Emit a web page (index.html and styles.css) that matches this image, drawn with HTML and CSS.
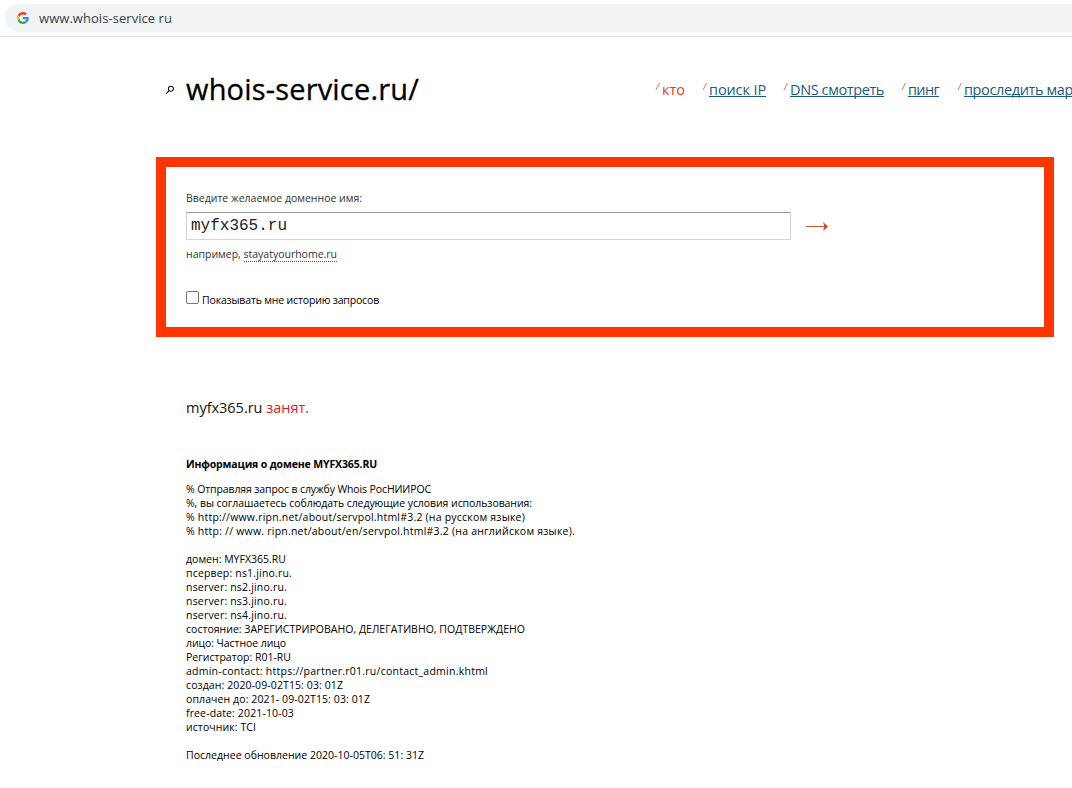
FILE: index.html
```html
<!DOCTYPE html>
<html lang="ru">
<head>
<meta charset="utf-8">
<title>whois-service.ru/</title>
<link rel="stylesheet" href="styles.css">
</head>
<body>
<div class="toolbar">
  <div class="address">
    <svg class="google" viewBox="0 0 48 48"><path fill="#ea4335" d="M24 9.500c3.500 0 6.700 1.200 9.200 3.600l6.900-6.900C35.900 2.400 30.500 0 24 0 14.600 0 6.500 5.400 2.600 13.200l8 6.200C12.400 13.700 17.700 9.500 24 9.500z"/><path fill="#4285f4" d="M47 24.500c0-1.600-.2-3.100-.4-4.500H24v9h12.900c-.6 3-2.200 5.500-4.700 7.200l7.700 6C44.400 38 47 31.800 47 24.500z"/><path fill="#fbbc05" d="M10.500 28.600c-.5-1.500-.8-3-.8-4.600s.3-3.100.8-4.600l-8-6.200C.9 16.500 0 20.100 0 24s.9 7.500 2.600 10.800z"/><path fill="#34a853" d="M24 48c6.500 0 11.900-2.100 15.900-5.800l-7.700-6c-2.200 1.500-4.900 2.300-8.200 2.300-6.300 0-11.600-4.200-13.500-9.900l-8 6.200C6.500 42.600 14.600 48 24 48z"/></svg>
    <span class="url" data-width="133">www.whois-service ru</span>
  </div>
</div>
<header class="header">
  <svg class="search" viewBox="0 0 10 10"><circle cx="5.900" cy="3.800" r="2.500"/><path d="M4.100 5.700 1 8.800"/></svg>
  <h1 class="title"><span data-width="233">whois-service.ru/</span></h1>
  <nav class="nav">
    <a class="item current"><i class="slash">/</i><span data-width="23">кто</span></a>
    <a class="item second"><i class="slash">/</i><span class="link" data-width="57">поиск IP</span></a>
    <a class="item third"><i class="slash">/</i><span class="link" data-width="94">DNS смотреть</span></a>
    <a class="item fourth"><i class="slash">/</i><span class="link" data-width="31">пинг</span></a>
    <a class="item fifth"><i class="slash">/</i><span class="link" data-width="109">проследить мар</span></a>
  </nav>
</header>
<main class="main">
  <form class="lookup">
    <label class="caption" for="domain"><span data-width="176">Введите желаемое доменное имя:</span></label>
    <div class="field">
      <input class="domain" id="domain" type="text" value="myfx365.ru">
      <svg class="arrow" viewBox="0 0 24 10"><path class="shaft" d="M1 5.500H20"/><path class="head" d="M18 1 19.500 5.500 18 10 23 5.500z"/></svg>
    </div>
    <p class="example"><span data-width="151">например, <span class="sample">stayatyourhome.ru</span></span></p>
    <label class="history"><span class="check"></span><span data-width="177">Показывать мне историю запросов</span></label>
  </form>
  <section class="results">
    <p class="status"><span data-width="123">myfx365.ru <span class="taken">занят.</span></span></p>
    <h2 class="subtitle"><span data-width="191">Информация о домене MYFX365.RU</span></h2>
    <div class="record">
      <p><span data-width="245">% Отправляя запрос в службу Whois РосНИИРОС</span></p>
      <p><span data-width="346">%, вы соглашаетесь соблюдать следующие условия использования:</span></p>
      <p><span data-width="339">% http://www.ripn.net/about/servpol.html#3.2 (на русском языке)</span></p>
      <p><span data-width="389">% http: // www. ripn.net/about/en/servpol.html#3.2 (на английском языке).</span></p>
    </div>
    <div class="record">
      <p><span data-width="100">домен: MYFX365.RU</span></p>
      <p><span data-width="106">псервер: ns1.jino.ru.</span></p>
      <p><span data-width="101">nserver: ns2.jino.ru.</span></p>
      <p><span data-width="101">nserver: ns3.jino.ru.</span></p>
      <p><span data-width="101">nserver: ns4.jino.ru.</span></p>
      <p><span data-width="339">состояние: ЗАРЕГИСТРИРОВАНО, ДЕЛЕГАТИВНО, ПОДТВЕРЖДЕНО</span></p>
      <p><span data-width="100">лицо: Частное лицо</span></p>
      <p><span data-width="105">Регистратор: R01-RU</span></p>
      <p><span data-width="302">admin-contact: https://partner.r01.ru/contact_admin.khtml</span></p>
      <p><span data-width="157">создан: 2020-09-02T15: 03: 01Z</span></p>
      <p><span data-width="184">оплачен до: 2021- 09-02T15: 03: 01Z</span></p>
      <p><span data-width="108">free-date: 2021-10-03</span></p>
      <p><span data-width="70">источник: TCI</span></p>
    </div>
    <div class="record">
      <p><span data-width="238">Последнее обновление 2020-10-05T06: 51: 31Z</span></p>
    </div>
  </section>
</main>
<script src="fit.js"></script>
</body>
</html>
```
FILE: styles.css
```css
* { box-sizing: border-box; }
body {
  margin: 0;
  height: 788px;
  overflow: hidden;
  background: #fff;
  color: #000;
  font: 10.5px/14px "Trebuchet MS", "Open Sans", sans-serif;
}
p, h1, h2 { margin: 0; }
[data-width] { white-space: nowrap; }
.toolbar {
  height: 37px;
  padding: 4px 0 0 5px;
  border-bottom: 1px solid #dfe1e4;
}
.address {
  display: flex;
  align-items: center;
  height: 28px;
  padding-left: 12px;
  border-radius: 14px 0 0 14px;
  background: #f1f3f4;
}
.google { width: 12px; height: 12px; margin-right: 10px; }
.url { color: #3c4043; font: 13px/28px "Open Sans", sans-serif; }
.header {
  display: flex;
  align-items: center;
  height: 104px;
  padding-left: 165px;
}
.search {
  flex: none;
  width: 10px;
  height: 10px;
  margin: 2px 11px 0 0;
  fill: none;
  stroke: #111;
  stroke-width: 1.1;
}
.title {
  flex: none;
  width: 470px;
  font-size: 29px;
  font-weight: 400;
  line-height: 36px;
  -webkit-text-stroke: 0.3px #000;
}
.nav { display: flex; flex: none; margin-top: 2px; font-size: 14.5px; line-height: 20px; color: #1b5b7e; }
.item { display: flex; flex: none; width: 47px; }
.second { width: 81px; }
.third { width: 118px; }
.fourth { width: 56px; }
.fifth { width: 120px; }
.slash { width: 6px; color: #e0492a; font-size: 9px; line-height: 14px; }
.current { color: #e0401c; }
.link { text-decoration: underline; text-underline-offset: 1px; text-decoration-thickness: 1px; text-decoration-skip-ink: none; }
.main { padding: 16px 18px 0 156px; }
.lookup {
  height: 180px;
  padding: 24px 20px 0;
  border: 10px solid #ff3500;
  color: #333;
}
.caption { display: block; height: 21px; }
.field { display: flex; align-items: center; }
.domain {
  width: 605px;
  height: 28px;
  padding: 0 4px;
  border: 1px solid #d4d4d4;
  border-top-color: #999;
  border-radius: 0;
  outline: none;
  color: #222;
  font: 16px "Liberation Mono", monospace;
}
.arrow { width: 24px; height: 10px; margin-left: 14px; }
.shaft { fill: none; stroke: #e25540; }
.head { fill: #df3628; }
.example { margin-top: 7px; }
.sample { border-bottom: 1px dotted #555; }
.history { display: flex; align-items: center; margin-top: 32px; color: #000; }
.check {
  width: 13px;
  height: 13px;
  margin: -6px 3px 0 0;
  border: 1px solid #767676;
  border-radius: 2px;
}
.results { padding: 61px 0 0 30px; }
.status { font-size: 14.5px; line-height: 20px; color: #111; }
.taken { color: #e01818; }
.subtitle { margin-top: 39px; font-size: 10.5px; font-weight: 700; line-height: 14px; }
.record { margin-top: 14px; }
.subtitle + .record { margin-top: 11px; }
```
FILE: fit.js
```js
document.querySelectorAll("[data-width]").forEach((run) => {
  const natural = run.getBoundingClientRect().width;
  const gap = Number(run.dataset.width) - natural;
  run.style.letterSpacing = gap / run.textContent.length + "px";
});
```
